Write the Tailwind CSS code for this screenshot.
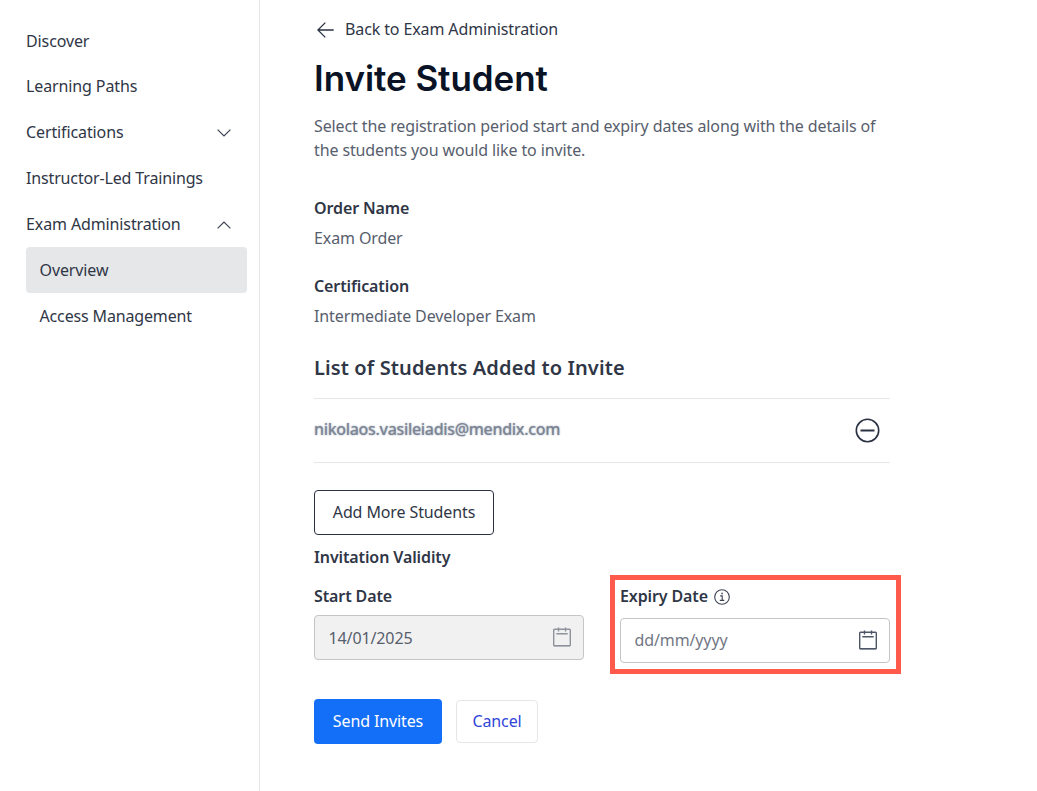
<!DOCTYPE html>
<html lang="en">
<head>
<meta charset="utf-8">
<title>Invite Student</title>
<script src="https://cdn.jsdelivr.net/npm/@tailwindcss/browser@4"></script>
</head>
<body class="bg-white">
<div class="flex h-[791px] w-[1037px] overflow-hidden bg-white font-['Noto_Sans',sans-serif] text-base leading-6 tracking-[-0.115px] text-[#2f3646]">
  <nav class="flex w-[260px] shrink-0 flex-col border-r border-[#e5e6e8] pt-[18px] pr-3 pl-[26px]">
    <a class="flex h-[45px] items-center">Discover</a>
    <a class="flex h-[46px] items-center">Learning Paths</a>
    <a class="flex h-[46px] items-center justify-between pr-4">Certifications
      <svg class="mt-0.5 h-2 w-3.5" viewBox="0 0 14 8" fill="none" stroke="#3b4253" stroke-width="1.2"><path d="M.6.6 7 7 13.4.6"/></svg>
    </a>
    <a class="flex h-[46px] items-center tracking-[-0.15px]">Instructor-Led Trainings</a>
    <a class="flex h-[46px] items-center justify-between pr-4">Exam Administration
      <svg class="mt-0.5 h-2 w-3.5" viewBox="0 0 14 8" fill="none" stroke="#3b4253" stroke-width="1.2"><path d="M.6 7.4 7 1l6.4 6.4"/></svg>
    </a>
    <a class="flex h-[46px] items-center rounded bg-[#e6e7e9] pl-[13.5px]">Overview</a>
    <a class="flex h-[46px] items-center pl-[13.5px] tracking-[-0.15px]">Access Management</a>
  </nav>

  <main class="ml-[54px] flex w-[587px] shrink-0 flex-col pt-[17px]">
    <a class="flex h-6 items-center gap-[11px] pl-[3px]">
      <svg class="mt-0.5 h-4 w-[17px]" viewBox="0 0 17 16" fill="none" stroke="#2a3142" stroke-width="1.3"><path d="M16.7 8H.9M8.3.6.9 8l7.4 7.4"/></svg>
      <span>Back to Exam Administration</span>
    </a>
    <h1 class="mt-[15px] h-11 font-[Inter,sans-serif] text-[35px] leading-[44px] font-semibold tracking-[-0.05px] whitespace-nowrap text-[#0a1325]">Invite Student</h1>
    <p class="mt-3.5 w-[576px] text-[#575e6d]">Select the registration period start and expiry dates along with the details of<br>the students you would like to invite.</p>

    <dl class="mt-[34px]">
      <dt class="font-semibold">Order Name</dt>
      <dd class="mt-1.5 text-[#575e6d]">Exam Order</dd>
      <dt class="mt-6 font-semibold">Certification</dt>
      <dd class="mt-1.5 text-[#575e6d]">Intermediate Developer Exam</dd>
    </dl>

    <h2 class="mt-[26px] text-xl leading-7 font-semibold tracking-[0.12px]">List of Students Added to Invite</h2>
    <div class="mt-4 flex h-[65px] w-[576px] items-center justify-between border-y border-[#e5e6e8] pr-2.5">
      <span class="mb-1 font-medium tracking-[-0.32px] text-[#7d8594] text-shadow-[0_0_2px_#9aa4b4]">nikolaos.vasileiadis@mendix.com</span>
      <svg class="size-[25px]" viewBox="0 0 25 25" fill="none" stroke="#2a3142"><circle cx="12.5" cy="12.5" r="11.2" stroke-width="1.6"/><path d="M5.5 12.5h14" stroke-width="2"/></svg>
    </div>

    <button class="mt-[27px] h-[45px] w-[180px] rounded border border-[#2a3142] pb-0.5">Add More Students</button>
    <h3 class="mt-2.5 font-semibold">Invitation Validity</h3>

    <div class="mt-1.5 flex justify-between">
      <div class="w-[270px] pt-[9px]">
        <label class="block font-semibold">Start Date</label>
        <div class="mt-[7px] flex h-[45px] items-center justify-between rounded border border-[#c3c5c9] bg-[#f1f1f1] pr-3 pl-[13.5px] text-[#575e6d]">14/01/2025
          <svg class="mb-px h-5 w-[18px]" viewBox="0 0 18 20" fill="none" stroke="#8d929b" stroke-width="1.4"><rect x=".7" y="2.2" width="16.6" height="16.6" rx=".8"/><path d="M5.5.4v4.2M12.5.4v4.2M3.3 6.8h11.4M1 18.6h16"/></svg>
        </div>
      </div>
      <div class="h-[99px] w-[291px] border-5 border-[#ff5a4c] pt-1 pl-[5px]">
        <label class="flex items-center gap-1.5 font-semibold">Expiry Date
          <svg class="mt-0.5 size-4" viewBox="0 0 16 16" fill="none" stroke="#3b4253" stroke-width="1.1"><circle cx="8" cy="8" r="7.3"/><path d="M6.2 6.9h2v4.2M5.8 11.4h4.5"/><path d="M7.3 4.6h1.5" stroke-width="1.5"/></svg>
        </label>
        <div class="mt-2.5 flex h-[45px] w-[270px] items-center justify-between rounded border border-[#c3c5c9] pr-3 pb-0.5 pl-[13.5px] text-[#717784]">dd/mm/yyyy
          <svg class="h-5 w-[18px]" viewBox="0 0 18 20" fill="none" stroke="#4c5667" stroke-width="1.4"><rect x=".7" y="2.2" width="16.6" height="16.6" rx=".8"/><path d="M5.5.4v4.2M12.5.4v4.2M3.3 6.8h11.4M1 18.6h16"/></svg>
        </div>
      </div>
    </div>

    <div class="mt-[25px] flex items-center gap-3.5">
      <button class="h-[45px] w-32 rounded bg-[#146ff8] pb-0.5 text-white">Send Invites</button>
      <button class="h-[43px] w-[82px] rounded border border-[#e5e6e8] pb-0.5 text-[#2f45d8]">Cancel</button>
    </div>
  </main>
</div>
</body>
</html>
